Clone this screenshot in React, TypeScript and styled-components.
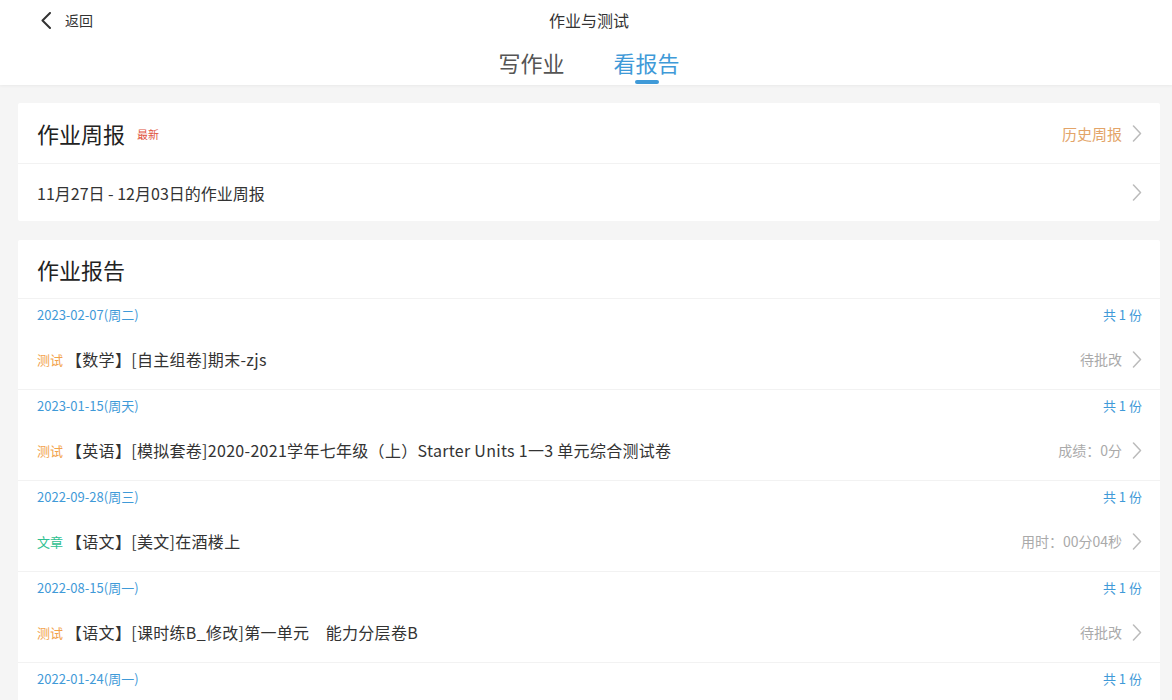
import React from 'react';
import styled, { createGlobalStyle } from 'styled-components';

const GlobalStyle = createGlobalStyle`
  html, body {
    margin: 0;
    padding: 0;
    background: #f5f5f5;
  }
  body {
    font-family: 'Noto Sans CJK SC', 'Noto Sans', 'Liberation Sans', sans-serif;
    color: #333;
  }
`;

const Page = styled.div`
  width: 1172px;
  height: 700px;
  overflow: hidden;
  background: #f5f5f5;
`;

const Header = styled.header`
  background: #fff;
  box-shadow: 0 1px 3px rgba(0, 0, 0, 0.05);
  position: relative;
  z-index: 1;
`;

const TopBar = styled.div`
  height: 40px;
  display: grid;
  grid-template-columns: 1fr auto 1fr;
  align-items: center;
  padding: 0 12px 0 18px;
`;

const Back = styled.div`
  display: flex;
  align-items: center;
  gap: 13px;
  padding-left: 22px;
  font-size: 14px;
  color: #333;
`;

const Title = styled.div`
  font-size: 16px;
  color: #333;
`;

const Tabs = styled.div`
  display: flex;
  justify-content: center;
  gap: 49px;
  padding: 6px 12px 1px 18px;
`;

const Tab = styled.div<{ $active?: boolean }>`
  display: flex;
  flex-direction: column;
  align-items: center;
  font-size: 22px;
  line-height: 32px;
  color: ${(p) => (p.$active ? '#3f9ad8' : '#555')};

  &::after {
    content: '';
    width: 24px;
    height: 4px;
    margin-top: 2px;
    border-radius: 2px;
    background: ${(p) => (p.$active ? '#3f9ad8' : 'transparent')};
  }
`;

const Body = styled.main`
  padding: 18px 12px 0 18px;
  display: flex;
  flex-direction: column;
  gap: 19px;
`;

const Card = styled.section<{ $tall?: boolean }>`
  background: #fff;
  border-radius: 2px;
  min-height: ${(p) => (p.$tall ? '520px' : 'auto')};
`;

const Row = styled.div<{ $h: number; $line?: boolean; $lift?: number }>`
  height: ${(p) => p.$h}px;
  box-sizing: border-box;
  display: flex;
  align-items: center;
  justify-content: space-between;
  padding: 0 18px ${(p) => p.$lift ?? 0}px 19px;
  border-bottom: ${(p) => (p.$line ? '1px solid #f2f2f2' : 'none')};
`;

const Left = styled.div`
  display: flex;
  align-items: center;
  min-width: 0;
`;

const Right = styled.div`
  display: flex;
  align-items: center;
  gap: 10px;
`;

const CardTitle = styled.h2`
  margin: 0;
  font-size: 22px;
  font-weight: 400;
  color: #222;
`;

const NewBadge = styled.span`
  font-size: 11px;
  color: #e0533f;
  margin-left: 12px;
  margin-top: 2px;
`;

const Link = styled.span`
  font-size: 15px;
  color: #e3a468;
`;

const PlainText = styled.span`
  font-size: 16px;
  color: #333;
`;

const DateText = styled.span`
  font-size: 13px;
  color: #3f9ad8;
`;

const Count = styled.span`
  font-size: 13px;
  color: #3f9ad8;
`;

const Tag = styled.span<{ $kind: 'test' | 'article' }>`
  font-size: 13px;
  margin-right: 3px;
  color: ${(p) => (p.$kind === 'test' ? '#f2a24a' : '#2fbf91')};
`;

const ItemTitle = styled.span`
  font-size: 16px;
  letter-spacing: 0.3px;
  color: #333;
  white-space: nowrap;
`;

const Status = styled.span`
  font-size: 14px;
  color: #aaa;
`;

const Chevron = () => (
  <svg width="10" height="17" viewBox="0 0 10 17" fill="none">
    <path d="M1.5 1 L8.5 8.5 L1.5 16" stroke="#bbb" strokeWidth="1.5" strokeLinejoin="round" strokeLinecap="round" />
  </svg>
);

const BackIcon = () => (
  <svg width="12" height="17" viewBox="0 0 12 17" fill="none">
    <path d="M10 1 L2.5 8.5 L10 16" stroke="#333" strokeWidth="2" strokeLinejoin="round" strokeLinecap="round" />
  </svg>
);

type Report = {
  date: string;
  kind?: 'test' | 'article';
  title?: string;
  status?: string;
};

const reports: Report[] = [
  { date: '2023-02-07(周二)', kind: 'test', title: '【数学】[自主组卷]期末-zjs', status: '待批改' },
  {
    date: '2023-01-15(周天)',
    kind: 'test',
    title: '【英语】[模拟套卷]2020-2021学年七年级（上）Starter Units 1一3 单元综合测试卷',
    status: '成绩：0分',
  },
  { date: '2022-09-28(周三)', kind: 'article', title: '【语文】[美文]在酒楼上', status: '用时：00分04秒' },
  { date: '2022-08-15(周一)', kind: 'test', title: '【语文】[课时练B_修改]第一单元\u3000能力分层卷B', status: '待批改' },
  { date: '2022-01-24(周一)' },
];

export default function App() {
  return (
    <Page>
      <GlobalStyle />
      <Header>
        <TopBar>
          <Back>
            <BackIcon />
            返回
          </Back>
          <Title>作业与测试</Title>
          <div />
        </TopBar>
        <Tabs>
          <Tab>写作业</Tab>
          <Tab $active>看报告</Tab>
        </Tabs>
      </Header>

      <Body>
        <Card>
          <Row $h={61} $line>
            <Left>
              <CardTitle>作业周报</CardTitle>
              <NewBadge>最新</NewBadge>
            </Left>
            <Right>
              <Link>历史周报</Link>
              <Chevron />
            </Right>
          </Row>
          <Row $h={57}>
            <PlainText>11月27日 - 12月03日的作业周报</PlainText>
            <Chevron />
          </Row>
        </Card>

        <Card $tall>
          <Row $h={59} $line>
            <CardTitle>作业报告</CardTitle>
          </Row>
          {reports.map((r) => (
            <React.Fragment key={r.date}>
              <Row $h={34} $lift={4}>
                <DateText>{r.date}</DateText>
                <Count>共 1 份</Count>
              </Row>
              {r.title && (
                <Row $h={57} $line $lift={4}>
                  <Left>
                    <Tag $kind={r.kind!}>{r.kind === 'test' ? '测试' : '文章'}</Tag>
                    <ItemTitle>{r.title}</ItemTitle>
                  </Left>
                  <Right>
                    <Status>{r.status}</Status>
                    <Chevron />
                  </Right>
                </Row>
              )}
            </React.Fragment>
          ))}
        </Card>
      </Body>
    </Page>
  );
}
